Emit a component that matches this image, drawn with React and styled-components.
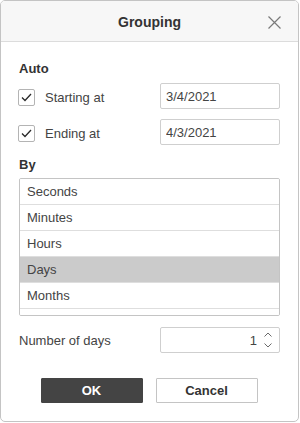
import React, { useState } from 'react';
import styled, { createGlobalStyle } from 'styled-components';

const GlobalStyle = createGlobalStyle`
  html, body {
    margin: 0;
    padding: 0;
    background: #ffffff;
  }
  body {
    font-family: "Liberation Sans", Arial, sans-serif;
  }
`;

const units = ['Seconds', 'Minutes', 'Hours', 'Days', 'Months'];

const App = () => {
  const [selected, setSelected] = useState('Days');
  const [useStart, setUseStart] = useState(true);
  const [useEnd, setUseEnd] = useState(true);

  return (
    <>
      <GlobalStyle />
      <Dialog>
        <Header>
          <Title>Grouping</Title>
          <CloseButton aria-label="Close">
            <svg width="13" height="13" viewBox="0 0 13 13">
              <path d="M0.5 0.5 L12.5 12.5 M12.5 0.5 L0.5 12.5" stroke="#7a7a7a" strokeWidth="1.2" fill="none" />
            </svg>
          </CloseButton>
        </Header>
        <Body>
          <SectionLabel $top={19}>Auto</SectionLabel>
          <FieldRow $top={6}>
            <CheckLabel onClick={() => setUseStart(!useStart)}>
              <CheckBox>{useStart && <CheckMark />}</CheckBox>
              Starting at
            </CheckLabel>
            <TextInput defaultValue="3/4/2021" />
          </FieldRow>
          <FieldRow $top={10}>
            <CheckLabel onClick={() => setUseEnd(!useEnd)}>
              <CheckBox>{useEnd && <CheckMark />}</CheckBox>
              Ending at
            </CheckLabel>
            <TextInput defaultValue="4/3/2021" />
          </FieldRow>
          <SectionLabel $top={12}>By</SectionLabel>
          <List>
            {units.map((u) => (
              <ListItem key={u} $active={u === selected} onClick={() => setSelected(u)}>
                {u}
              </ListItem>
            ))}
            <ListFiller />
          </List>
          <FieldRow $top={11}>
            <PlainLabel>Number of days</PlainLabel>
            <SpinBox>
              <SpinValue>1</SpinValue>
              <SpinArrows>
                <svg width="8" height="5" viewBox="0 0 8 5">
                  <path d="M0.5 4.5 L4 1 L7.5 4.5" stroke="#6a6a6a" strokeWidth="1" fill="none" />
                </svg>
                <svg width="8" height="5" viewBox="0 0 8 5">
                  <path d="M0.5 0.5 L4 4 L7.5 0.5" stroke="#6a6a6a" strokeWidth="1" fill="none" />
                </svg>
              </SpinArrows>
            </SpinBox>
          </FieldRow>
          <Footer>
            <Button $primary>OK</Button>
            <Button>Cancel</Button>
          </Footer>
        </Body>
      </Dialog>
    </>
  );
};

const CheckMark = () => (
  <svg width="11" height="9" viewBox="0 0 11 9">
    <path d="M1 4.5 L4 7.5 L10 1" stroke="#2a2a2a" strokeWidth="1.3" fill="none" />
  </svg>
);

const Dialog = styled.div`
  box-sizing: border-box;
  width: 299px;
  height: 422px;
  border: 1px solid #c4c4c4;
  border-radius: 5px;
  overflow: hidden;
  background: #fff;
  display: flex;
  flex-direction: column;
`;

const Header = styled.div`
  position: relative;
  height: 40px;
  background: #f7f7f7;
  border-bottom: 1px solid #dcdcdc;
  display: flex;
  align-items: center;
  justify-content: center;
`;

const Title = styled.div`
  font-size: 14px;
  font-weight: bold;
  color: #333;
  margin-top: 2px;
`;

const CloseButton = styled.button`
  position: absolute;
  right: 16px;
  top: 14px;
  width: 15px;
  height: 15px;
  padding: 1px;
  border: none;
  background: none;
  display: flex;
  cursor: pointer;
`;

const Body = styled.div`
  display: flex;
  flex-direction: column;
  padding: 0 18px 0 17px;
`;

const SectionLabel = styled.div`
  margin-top: ${(p) => p.$top}px;
  padding-left: 1px;
  height: 16px;
  line-height: 16px;
  font-size: 13px;
  font-weight: bold;
  color: #333;
`;

const FieldRow = styled.div`
  margin-top: ${(p) => p.$top}px;
  display: flex;
  align-items: center;
  justify-content: space-between;
  height: 26px;
`;

const CheckLabel = styled.label`
  display: flex;
  align-items: center;
  gap: 10px;
  font-size: 13px;
  color: #444;
  cursor: pointer;
  padding-top: 2px;
`;

const CheckBox = styled.span`
  box-sizing: border-box;
  width: 17px;
  height: 17px;
  border: 1px solid #b4b4b4;
  border-radius: 2px;
  display: flex;
  align-items: center;
  justify-content: center;
  background: #fff;
`;

const PlainLabel = styled.span`
  padding-left: 1px;
  font-size: 13px;
  color: #444;
  padding-top: 1px;
`;

const TextInput = styled.input`
  box-sizing: border-box;
  width: 120px;
  height: 26px;
  padding: 0 5px;
  border: 1px solid #cfcfcf;
  border-radius: 2px;
  font-family: "Liberation Sans", Arial, sans-serif;
  font-size: 13px;
  color: #444;
  outline: none;
`;

const List = styled.div`
  box-sizing: border-box;
  margin-top: 5px;
  margin-left: 1px;
  height: 138px;
  border: 1px solid #c4c4c4;
  border-radius: 2px;
  overflow: hidden;
`;

const ListItem = styled.div`
  box-sizing: border-box;
  height: 26px;
  line-height: 25px;
  padding-left: 7px;
  font-size: 13px;
  color: #444;
  border-bottom: 1px solid #dedede;
  background: ${(p) => (p.$active ? '#cbcbcb' : '#fff')};
  cursor: pointer;
`;

const ListFiller = styled.div`
  height: 6px;
  background: #fff;
`;

const SpinBox = styled.div`
  box-sizing: border-box;
  width: 120px;
  height: 26px;
  border: 1px solid #cfcfcf;
  border-radius: 2px;
  display: flex;
  align-items: center;
  justify-content: flex-end;
  padding-right: 7px;
  gap: 7px;
`;

const SpinValue = styled.span`
  font-size: 13px;
  color: #444;
`;

const SpinArrows = styled.div`
  display: flex;
  flex-direction: column;
  gap: 6px;
`;

const Footer = styled.div`
  margin-top: 25px;
  display: flex;
  justify-content: center;
  gap: 13px;
`;

const Button = styled.button`
  box-sizing: border-box;
  width: 102px;
  height: 25px;
  border: 1px solid ${(p) => (p.$primary ? '#444' : '#c4c4c4')};
  border-radius: 1px;
  background: ${(p) => (p.$primary ? '#444' : '#fff')};
  color: ${(p) => (p.$primary ? '#fff' : '#333')};
  font-family: "Liberation Sans", Arial, sans-serif;
  font-size: 13px;
  font-weight: bold;
  cursor: pointer;
`;

export default App;
